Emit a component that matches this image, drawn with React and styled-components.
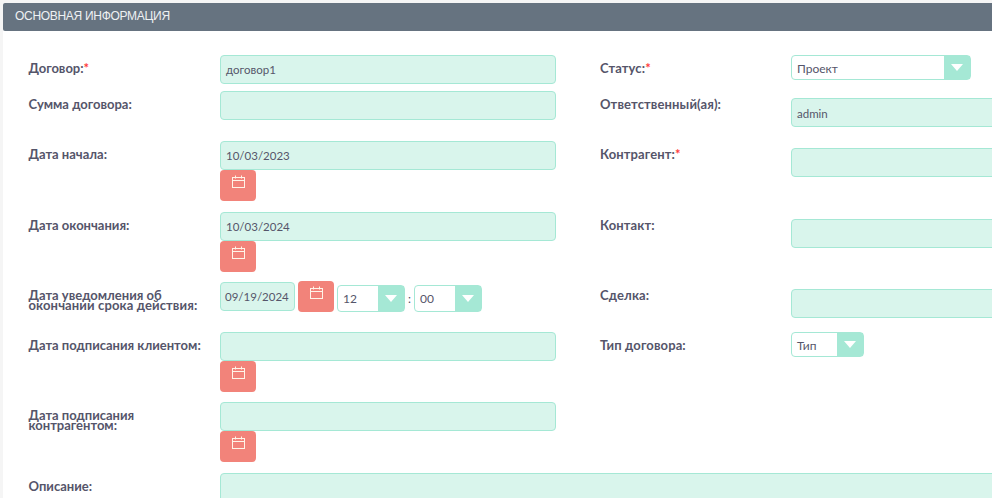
import styled, { createGlobalStyle } from "styled-components";

const GlobalStyle = createGlobalStyle`
    html, body {
        margin: 0;
        height: 100%;
        overflow: hidden;
        background: #f5f5f5;
    }
`

const CalendarIcon = () => (
    <svg width="15" height="14" viewBox="0 0 15 14" fill="none" stroke="#fff4e8" strokeWidth="1">
        <rect x="1.5" y="2.5" width="12" height="10" />
        <path d="M1.5 5.5h12M4.5 0.5v3M10.5 0.5v3" />
    </svg>
)

const Row = ({ top, label, required, right, wide, children, height, two, rightLabel, rightRequired }) => (
    <FormRow $height={height}>
        <Label $top={top}>
            {label}{required && <Star>*</Star>}
        </Label>
        <Cell $wide={wide}>{children}</Cell>
        {!wide && <RightLabel $top={top}>{rightLabel}{rightRequired && <Star>*</Star>}</RightLabel>}
        {!wide && <Cell $offset={two}>{right}</Cell>}
    </FormRow>
)

const DateField = ({ value }) => (
    <>
        <Field>{value}</Field>
        <CalButton><CalendarIcon /></CalButton>
    </>
)

const Select = ({ value, width, tall }) => (
    <SelectBox $width={width} $tall={tall}>
        <SelectValue>{value}</SelectValue>
        <SelectArrow><Triangle /></SelectArrow>
    </SelectBox>
)

const App = () => {
    return (
        <Page>
            <GlobalStyle />
            <Header>Основная информация</Header>
            <Form>
                <Row height={36} label="Договор:" required rightLabel="Статус:" rightRequired right={<Select value="Проект" width={180} />}>
                    <Field>договор1</Field>
                </Row>
                <Row height={50} label="Сумма договора:" rightLabel="Ответственный(ая):" two={7} right={<Field $open>admin</Field>}>
                    <Field />
                </Row>
                <Row height={71} label="Дата начала:" rightLabel="Контрагент:" rightRequired two={7} right={<Field $open />}>
                    <DateField value="10/03/2023" />
                </Row>
                <Row height={70} label="Дата окончания:" rightLabel="Контакт:" two={7} right={<Field $open />}>
                    <DateField value="10/03/2024" />
                </Row>
                <Row height={50} label={<>Дата уведомления об<br /><WideLine>окончании срока действия:</WideLine></>} rightLabel="Сделка:" two={7} right={<Field $open />}>
                    <DateTime>
                        <SmallDate>09/19/2024</SmallDate>
                        <InlineCalButton><CalendarIcon /></InlineCalButton>
                        <Select value="12" width={68} tall />
                        <Colon>:</Colon>
                        <Select value="00" width={68} tall />
                    </DateTime>
                </Row>
                <Row height={70} label="Дата подписания клиентом:" rightLabel="Тип договора:" right={<Select value="Тип" width={73} />}>
                    <DateField />
                </Row>
                <Row height={71} label={<>Дата подписания<br />контрагентом:</>}>
                    <DateField />
                </Row>
                <Row height={40} wide label="Описание:">
                    <DescriptionField />
                </Row>
            </Form>
        </Page>
    )
}
export default App;

const Page = styled.div`
    margin: 3px 0 0 3px;
    width: 1300px;
    height: 495px;
    background: #ffffff;
    font-family: "Lato", "Open Sans", sans-serif;
    color: #4f4f63;
`

const Header = styled.div`
    height: 28px;
    line-height: 26px;
    padding-left: 12px;
    background: #667380;
    border-radius: 2px 0 0 2px;
    color: #eef1f3;
    font-family: "Liberation Sans", sans-serif;
    font-size: 12px;
    letter-spacing: -0.3px;
    text-transform: uppercase;
`

const Form = styled.div`
    padding: 24px 0 0 25.5px;
`

const FormRow = styled.div`
    display: grid;
    grid-template-columns: 191.5px 380px 191px 400px;
    height: ${(props) => props.$height}px;
`

const Label = styled.div`
    padding-top: ${(props) => props.$top ?? 8}px;
    font-size: 13px;
    font-weight: 700;
    line-height: 10px;
    color: #55556a;
`

const RightLabel = styled(Label)`
    letter-spacing: 0.12px;
`

const WideLine = styled.span`
    letter-spacing: 0.12px;
`

const Star = styled.span`
    color: #ff3b3b;
`

const Cell = styled.div`
    grid-column: ${(props) => props.$wide ? "span 3" : "auto"};
    padding-top: ${(props) => props.$offset ?? 0}px;
`

const Field = styled.div`
    box-sizing: border-box;
    width: ${(props) => props.$open ? "400px" : "336px"};
    height: 29px;
    padding: 0 5px;
    line-height: ${(props) => props.$open ? 30 : 28}px;
    background: #d9f5ec;
    border: 1px solid #a5e8d5;
    border-radius: 4px;
    font-size: 11.5px;
    color: #55556a;
`

const DescriptionField = styled(Field)`
    width: 900px;
    height: 60px;
`

const CalButton = styled.div`
    display: flex;
    justify-content: center;
    width: 36px;
    height: 31px;
    padding-top: 5px;
    box-sizing: border-box;
    background: #f2837a;
    border-radius: 4px;
`

const DateTime = styled.div`
    display: flex;
    align-items: flex-start;
    margin-top: -1px;
`

const SmallDate = styled(Field)`
    width: 75px;
    margin-top: 1px;
    padding: 0 4px;
    white-space: nowrap;
`

const InlineCalButton = styled(CalButton)`
    margin: 0 3px;
`

const Colon = styled.span`
    width: 9px;
    margin-top: 4px;
    font-size: 12px;
    line-height: 27px;
    text-align: center;
`

const SelectBox = styled.div`
    box-sizing: border-box;
    display: flex;
    width: ${(props) => props.$width}px;
    height: ${(props) => props.$tall ? 27 : 25}px;
    margin-top: ${(props) => props.$tall ? 4 : 0}px;
    background: #ffffff;
    border: 1px solid #a5e8d5;
    border-radius: 4px;
    font-size: 12px;
    color: #55556a;
`

const SelectValue = styled.div`
    flex: 1;
    padding-left: 5px;
    line-height: 25px;
`

const SelectArrow = styled.div`
    display: flex;
    align-items: center;
    justify-content: center;
    width: 26px;
    background: #a5e8d5;
`

const Triangle = styled.span`
    width: 0;
    height: 0;
    border-left: 6px solid transparent;
    border-right: 6px solid transparent;
    border-top: 7px solid #ffffff;
`
